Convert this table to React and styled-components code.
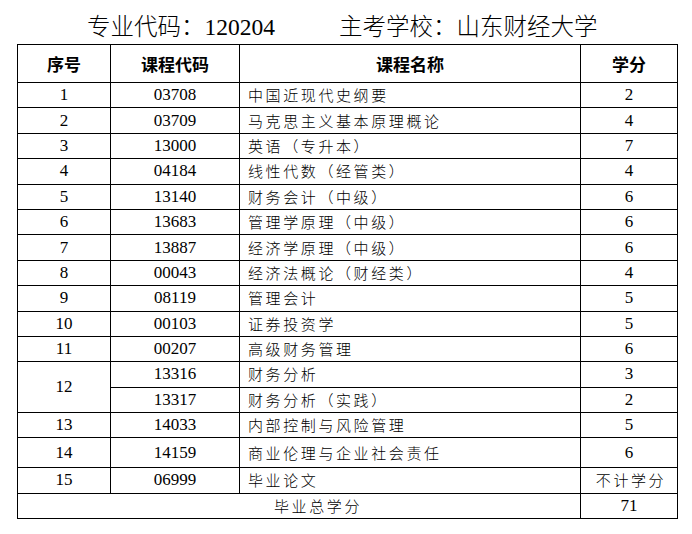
import React from "react";
import styled, { createGlobalStyle } from "styled-components";

const GlobalStyle = createGlobalStyle`
    html, body
    {
        margin: 0;
        padding: 0;
        background: #fff;
    }

    body
    {
        font-family: "Liberation Serif", "Noto Sans CJK SC", serif;
        color: #000;
    }
`;

const Page = styled.div`
    width: 692px;
    height: 534px;
    padding-left: 17px;
    box-sizing: border-box;
`;

const Title = styled.div`
    display: flex;
    height: 44px;
    box-sizing: border-box;
    padding: 13px 0 0 70px;
    font-size: 23.5px;
    line-height: 24px;
    white-space: nowrap;
`;

const TitlePart = styled.span`
    font-family: "Liberation Serif", "Noto Sans CJK SC", serif;
    margin-left: ${props => props.gap || 0}px;

    > .cjk
    {
        font-family: "Noto Sans CJK SC", sans-serif;
        font-weight: 300;
    }
`;

const Table = styled.table`
    border-collapse: collapse;
    table-layout: fixed;
    width: 660px;

    td, th
    {
        border: 1px solid #000;
        padding: 0;
        vertical-align: middle;
        white-space: nowrap;
        overflow: hidden;
    }
`;

const HeadCell = styled.th`
    height: 37px;
    font-family: "Noto Sans CJK SC", sans-serif;
    font-weight: 700;
    font-size: 17px;
    text-align: center;
`;

const Row = styled.tr`
    height: ${props => props.tall ? 29.7 : 25.4}px;
`;

const NumCell = styled.td`
    font-family: "Liberation Serif", serif;
    font-size: 17px;
    text-align: center;
    line-height: 18px;
`;

const NameCell = styled.td`
    font-family: "Noto Sans CJK SC", sans-serif;
    font-weight: 300;
    font-size: 15px;
    letter-spacing: 2.6px;
    line-height: 18px;
    text-align: ${props => props.center ? "center" : "left"};
    padding-left: ${props => props.indent || 8}px !important;
`;

const courses = [
    ["1", "03708", "中国近现代史纲要", "2"],
    ["2", "03709", "马克思主义基本原理概论", "4"],
    ["3", "13000", "英语（专升本）", "7"],
    ["4", "04184", "线性代数（经管类）", "4"],
    ["5", "13140", "财务会计（中级）", "6"],
    ["6", "13683", "管理学原理（中级）", "6"],
    ["7", "13887", "经济学原理（中级）", "6"],
    ["8", "00043", "经济法概论（财经类）", "4"],
    ["9", "08119", "管理会计", "5"],
    ["10", "00103", "证券投资学", "5"],
    ["11", "00207", "高级财务管理", "6"]
];

const later = [
    ["13", "14033", "内部控制与风险管理", "5"],
    ["14", "14159", "商业伦理与企业社会责任", "6", true]
];

export default function App() {
    return (
        <Page>
            <GlobalStyle />
            <Title>
                <TitlePart><span className="cjk">专业代码：</span>120204</TitlePart>
                <TitlePart gap={64}><span className="cjk">主考学校：山东财经大学</span></TitlePart>
            </Title>
            <Table>
                <colgroup>
                    <col style={{ width: 93 }} />
                    <col style={{ width: 129 }} />
                    <col style={{ width: 341 }} />
                    <col style={{ width: 97 }} />
                </colgroup>
                <thead>
                    <tr>
                        <HeadCell>序号</HeadCell>
                        <HeadCell>课程代码</HeadCell>
                        <HeadCell>课程名称</HeadCell>
                        <HeadCell>学分</HeadCell>
                    </tr>
                </thead>
                <tbody>
                    {courses.map(c => (
                        <Row key={c[0]}>
                            <NumCell>{c[0]}</NumCell>
                            <NumCell>{c[1]}</NumCell>
                            <NameCell>{c[2]}</NameCell>
                            <NumCell>{c[3]}</NumCell>
                        </Row>
                    ))}
                    <Row>
                        <NumCell rowSpan={2}>12</NumCell>
                        <NumCell>13316</NumCell>
                        <NameCell>财务分析</NameCell>
                        <NumCell>3</NumCell>
                    </Row>
                    <Row>
                        <NumCell>13317</NumCell>
                        <NameCell>财务分析（实践）</NameCell>
                        <NumCell>2</NumCell>
                    </Row>
                    {later.map(c => (
                        <Row key={c[0]} tall={c[4]}>
                            <NumCell>{c[0]}</NumCell>
                            <NumCell>{c[1]}</NumCell>
                            <NameCell>{c[2]}</NameCell>
                            <NumCell>{c[3]}</NumCell>
                        </Row>
                    ))}
                    <Row>
                        <NumCell>15</NumCell>
                        <NumCell>06999</NumCell>
                        <NameCell>毕业论文</NameCell>
                        <NameCell center indent={4}>不计学分</NameCell>
                    </Row>
                    <Row>
                        <NameCell colSpan={3} indent={256}>毕业总学分</NameCell>
                        <NumCell>71</NumCell>
                    </Row>
                </tbody>
            </Table>
        </Page>
    );
}
